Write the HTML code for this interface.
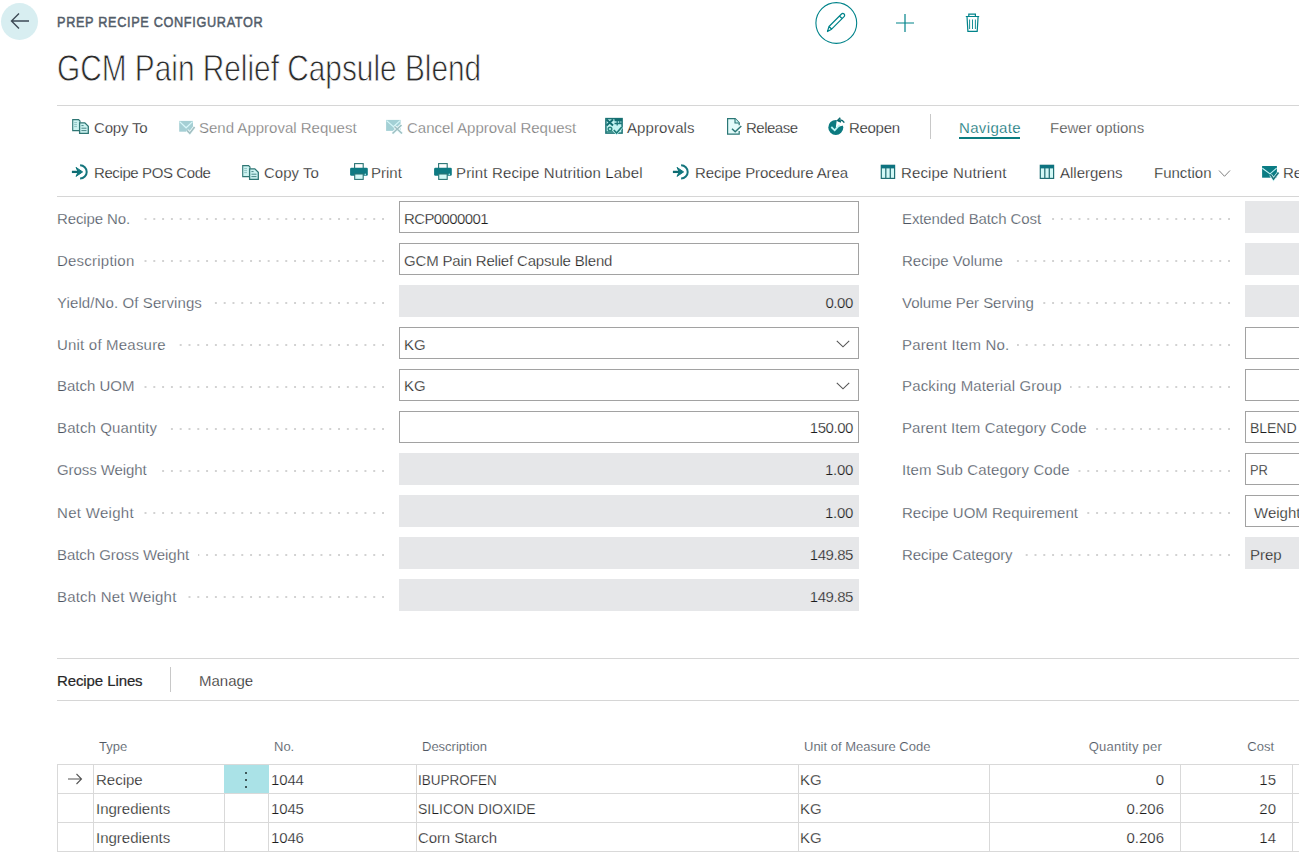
<!DOCTYPE html>
<html><head><meta charset="utf-8"><style>
html,body{margin:0;padding:0;background:#fff;width:1299px;height:852px;overflow:hidden;position:relative;font-family:"Liberation Sans",sans-serif}
.t{position:absolute;white-space:nowrap;-webkit-text-stroke:0.25px #fff}
.r{position:absolute}
.dots{position:absolute;height:2px;background-image:linear-gradient(to right,transparent 6.8px,#d2d2d2 6.8px);background-size:8.8px 2px;background-position:right top;background-repeat:repeat-x}
</style></head><body>
<div class="r" style="left:1px;top:3px;width:37px;height:37px;border-radius:50%;background:#d8eef1"></div>
<svg class="r" style="left:10px;top:12px" width="20" height="18" viewBox="0 0 20 18"><path d="M19 9H2M9 1.5L1.5 9L9 16.5" fill="none" stroke="#3d4a55" stroke-width="1.4"/></svg>
<div class="t " style="left:57px;top:12px;font-size:15px;line-height:20px;color:#525c69;font-size:15.5px;-webkit-text-stroke:0.5px #525c69;letter-spacing:0.8px;transform:scaleX(0.82);transform-origin:0 0;">PREP RECIPE CONFIGURATOR</div>
<div class="t " style="left:57px;top:49px;font-size:34px;line-height:40px;color:#2b2b2b;font-size:36px;transform:scaleX(0.828);transform-origin:0 0;-webkit-text-stroke:0.8px #fff;">GCM Pain Relief Capsule Blend</div>
<svg class="r" style="left:814px;top:1px" width="44" height="44" viewBox="0 0 44 44">
<circle cx="22.3" cy="22" r="20.4" fill="none" stroke="#00838a" stroke-width="1.1"/>
<path d="M13.5 30.5L15 25.5L27.5 13a1.8 1.8 0 0 1 2.6 2.6L17.6 28.2Z M25.5 15L28 17.5 M15 25.5L18 28.5" fill="none" stroke="#00838a" stroke-width="1.2" stroke-linejoin="round"/>
</svg>
<svg class="r" style="left:894px;top:12px" width="22" height="22" viewBox="0 0 22 22"><path d="M11 2V20M2 11H20" stroke="#00838a" stroke-width="1.2"/></svg>
<svg class="r" style="left:962px;top:11px" width="20" height="22" viewBox="0 0 20 22">
<path d="M3.8 5.5H17.2 M6.8 5.5V3.2H13.4V5.5 M5 5.5L5.9 20.4H15.2L16.1 5.5" fill="none" stroke="#00838a" stroke-width="1.2"/><path d="M7.6 8.5V18 M10.5 8.5V18 M13.4 8.5V18" fill="none" stroke="#00838a" stroke-width="0.9"/>
</svg>
<div class="r" style="left:57px;top:105px;width:1242px;height:1px;background:#d6d6d6"></div>
<div class="r" style="left:57px;top:196px;width:1242px;height:1px;background:#d6d6d6"></div>
<div class="r" style="left:57px;top:658px;width:1242px;height:1px;background:#d6d6d6"></div>
<div class="r" style="left:57px;top:700px;width:1242px;height:1px;background:#d6d6d6"></div>
<svg class="r" style="left:68px;top:114px" width="24" height="24" viewBox="0 0 24 24"><path d="M4.7 5.6H10.6L12 7V16.6H4.7Z" fill="#cdf3f1" stroke="#2f7674" stroke-width="1.1"/>
<path d="M6.2 8.6H9M6.2 10.6H9M6.2 12.6H9" stroke="#86bcbc" stroke-width="0.9"/>
<path d="M11.6 8.8H16.8L20.3 12.2V19.3H11.6Z" fill="#cdf3f1" stroke="#2f7674" stroke-width="1.3"/>
<path d="M13.4 11.6H15.6M13.4 14.2H18.5M13.4 16.6H18.5" stroke="#4a8888" stroke-width="1"/></svg>
<div class="t " style="left:94px;top:118px;font-size:15px;line-height:20px;color:#222222;letter-spacing:-0.2px">Copy To</div>
<svg class="r" style="left:175px;top:114px" width="24" height="24" viewBox="0 0 24 24"><path d="M4.2 6.9H18V17.7H4.2Z" fill="#a5cfd4"/>
<path d="M4.6 7.6L11.1 13.8L17.6 7.6" fill="none" stroke="#d9f7f9" stroke-width="1.2"/>
<path d="M12 16.4L14.8 19.2L19.6 13" fill="none" stroke="#f2fdfd" stroke-width="3.2"/>
<path d="M12 16.4L14.8 19.2L19.6 13" fill="none" stroke="#a3bfc2" stroke-width="1.6"/></svg>
<div class="t " style="left:199px;top:118px;font-size:15px;line-height:20px;color:#787878;">Send Approval Request</div>
<svg class="r" style="left:382px;top:114px" width="24" height="24" viewBox="0 0 24 24"><path d="M4.1 5.9H18.6V16.9H4.1Z" fill="#a3d0d5"/>
<path d="M4.6 6.6L11.4 12.8L18.1 6.6" fill="none" stroke="#d6f6f8" stroke-width="1.2"/>
<path d="M10.5 19.5L19.5 11M12.5 12.5L20 19.5" stroke="#effcfd" stroke-width="3.2"/>
<path d="M10.5 19.5L19.5 11M12.5 12.5L20 19.5" stroke="#9ebfc2" stroke-width="1.6"/></svg>
<div class="t " style="left:407px;top:118px;font-size:15px;line-height:20px;color:#787878;">Cancel Approval Request</div>
<svg class="r" style="left:601px;top:114px" width="24" height="24" viewBox="0 0 24 24"><rect x="4.9" y="4.6" width="16.2" height="14.5" fill="#c2f4f2" stroke="#1b7274" stroke-width="1.5"/>
<path d="M5.5 5.5L12 11.5M12 5.5L5.5 11.5" stroke="#136e71" stroke-width="2"/>
<rect x="13.5" y="4.5" width="7.6" height="2.8" fill="#136e71"/>
<path d="M16.2 7V11.5M18.8 7V10M13.5 9.5H21" stroke="#1d7779" stroke-width="1.3"/>
<circle cx="9" cy="15" r="1.8" fill="none" stroke="#2a857f" stroke-width="1.5"/>
<path d="M5 17.8H12.5" stroke="#2a857f" stroke-width="1.2"/>
<path d="M12.8 16L15.6 19L21 12.8" fill="none" stroke="#c2f4f2" stroke-width="3"/>
<path d="M12.8 16L15.6 19L21 12.8" fill="none" stroke="#1d7b78" stroke-width="1.7"/></svg>
<div class="t " style="left:627px;top:118px;font-size:15px;line-height:20px;color:#222222;letter-spacing:0.1px">Approvals</div>
<svg class="r" style="left:722px;top:114px" width="24" height="24" viewBox="0 0 24 24"><path d="M5.6 4.7H13.2L17.2 8.7V20.2H5.6Z" fill="#e3fbfa"/>
<path d="M17.2 11.2V8.7L13.2 4.7H5.6V20.2H17.2V17" fill="none" stroke="#2b7776" stroke-width="1.2"/>
<path d="M13 4.7V9H17.2" fill="#c4f2f0" stroke="#2b7776" stroke-width="1.1"/>
<path d="M10 14.8L13.2 17.8L19.3 12" fill="none" stroke="#2b7776" stroke-width="1.5"/></svg>
<div class="t " style="left:746px;top:118px;font-size:15px;line-height:20px;color:#222222;letter-spacing:-0.5px">Release</div>
<svg class="r" style="left:824px;top:114px" width="24" height="24" viewBox="0 0 24 24"><circle cx="11.8" cy="13.4" r="7.5" fill="#0b7a80"/>
<path d="M11.8 13.4L13 4.5L21 6L21 11Z" fill="#fff"/>
<path d="M19.2 10.5A7.5 7.5 0 0 1 11.8 20.9" fill="none" stroke="#0b7a80" stroke-width="0"/>
<path d="M14 6.8Q17.5 4.6 20.3 8.6" fill="none" stroke="#0c6a70" stroke-width="1.5"/>
<path d="M16.3 3.8L13.6 6.6L17 8" fill="none" stroke="#0c6a70" stroke-width="1.5"/>
<path d="M7.3 13L10.7 16.3L15.6 10.8" fill="none" stroke="#bdf6f6" stroke-width="1.8"/></svg>
<div class="t " style="left:849px;top:118px;font-size:15px;line-height:20px;color:#222222;letter-spacing:-0.3px">Reopen</div>
<div class="r" style="left:930px;top:114px;width:1px;height:25px;background:#c8c8c8"></div>
<div class="t " style="left:959px;top:118px;font-size:15px;line-height:20px;color:#006b70;letter-spacing:0.35px">Navigate</div>
<div class="r" style="left:959px;top:137px;width:61px;height:2px;background:#0b7c80"></div>
<div class="t " style="left:1050px;top:118px;font-size:15px;line-height:20px;color:#444444;">Fewer options</div>
<svg class="r" style="left:68px;top:160px" width="24" height="24" viewBox="0 0 24 24"><path d="M3.9 11.9H11" stroke="#0e6a70" stroke-width="2.3"/>
<path d="M8 7.4L14.6 11.9L8 16.4L10.2 11.9Z" fill="#0f767c" stroke="#0f767c" stroke-width="1" stroke-linejoin="round"/>
<path d="M12.1 5.3A6.6 6.6 0 0 1 12.1 18.5" fill="none" stroke="#14757d" stroke-width="2"/></svg>
<div class="t " style="left:94px;top:163px;font-size:15px;line-height:20px;color:#222222;letter-spacing:-0.4px">Recipe POS Code</div>
<svg class="r" style="left:238px;top:160px" width="24" height="24" viewBox="0 0 24 24"><path d="M4.7 5.6H10.6L12 7V16.6H4.7Z" fill="#cdf3f1" stroke="#2f7674" stroke-width="1.1"/>
<path d="M6.2 8.6H9M6.2 10.6H9M6.2 12.6H9" stroke="#86bcbc" stroke-width="0.9"/>
<path d="M11.6 8.8H16.8L20.3 12.2V19.3H11.6Z" fill="#cdf3f1" stroke="#2f7674" stroke-width="1.3"/>
<path d="M13.4 11.6H15.6M13.4 14.2H18.5M13.4 16.6H18.5" stroke="#4a8888" stroke-width="1"/></svg>
<div class="t " style="left:264px;top:163px;font-size:15px;line-height:20px;color:#222222;letter-spacing:0px">Copy To</div>
<svg class="r" style="left:347px;top:160px" width="24" height="24" viewBox="0 0 24 24"><rect x="7.6" y="3.6" width="8.6" height="5" fill="#fff" stroke="#2a7575" stroke-width="1.1"/>
<rect x="3.1" y="7.8" width="17.7" height="8" rx="1.3" fill="#0e7a82"/>
<rect x="7.7" y="14" width="8.5" height="5.4" fill="#d2f8f6" stroke="#2a7575" stroke-width="1.1"/>
<circle cx="18.3" cy="14.4" r="0.8" fill="#9de3e6"/></svg>
<div class="t " style="left:371px;top:163px;font-size:15px;line-height:20px;color:#222222;">Print</div>
<svg class="r" style="left:431px;top:160px" width="24" height="24" viewBox="0 0 24 24"><rect x="7.6" y="3.6" width="8.6" height="5" fill="#fff" stroke="#2a7575" stroke-width="1.1"/>
<rect x="3.1" y="7.8" width="17.7" height="8" rx="1.3" fill="#0e7a82"/>
<rect x="7.7" y="14" width="8.5" height="5.4" fill="#d2f8f6" stroke="#2a7575" stroke-width="1.1"/>
<circle cx="18.3" cy="14.4" r="0.8" fill="#9de3e6"/></svg>
<div class="t " style="left:456px;top:163px;font-size:15px;line-height:20px;color:#222222;letter-spacing:0.15px">Print Recipe Nutrition Label</div>
<svg class="r" style="left:669px;top:160px" width="24" height="24" viewBox="0 0 24 24"><path d="M3.9 11.9H11" stroke="#0e6a70" stroke-width="2.3"/>
<path d="M8 7.4L14.6 11.9L8 16.4L10.2 11.9Z" fill="#0f767c" stroke="#0f767c" stroke-width="1" stroke-linejoin="round"/>
<path d="M12.1 5.3A6.6 6.6 0 0 1 12.1 18.5" fill="none" stroke="#14757d" stroke-width="2"/></svg>
<div class="t " style="left:695px;top:163px;font-size:15px;line-height:20px;color:#222222;letter-spacing:-0.1px">Recipe Procedure Area</div>
<svg class="r" style="left:876px;top:160px" width="24" height="24" viewBox="0 0 24 24"><rect x="5.3" y="5.3" width="13.3" height="13.1" fill="#d3f8f6" stroke="#1f6f74" stroke-width="1.2"/>
<rect x="5" y="5" width="14" height="3.4" fill="#0d7380"/>
<path d="M9.8 8V18.5M14.3 8V18.5" stroke="#2a7379" stroke-width="1.3"/></svg>
<div class="t " style="left:901px;top:163px;font-size:15px;line-height:20px;color:#222222;letter-spacing:0.15px">Recipe Nutrient</div>
<svg class="r" style="left:1035px;top:160px" width="24" height="24" viewBox="0 0 24 24"><rect x="5.3" y="5.3" width="13.3" height="13.1" fill="#d3f8f6" stroke="#1f6f74" stroke-width="1.2"/>
<rect x="5" y="5" width="14" height="3.4" fill="#0d7380"/>
<path d="M9.8 8V18.5M14.3 8V18.5" stroke="#2a7379" stroke-width="1.3"/></svg>
<div class="t " style="left:1060px;top:163px;font-size:15px;line-height:20px;color:#222222;">Allergens</div>
<div class="t " style="left:1154px;top:163px;font-size:15px;line-height:20px;color:#222222;">Function</div>
<svg class="r" style="left:1218px;top:169px" width="13" height="9" viewBox="0 0 13 9"><path d="M1 1.5L6.5 7.3L12 1.5" fill="none" stroke="#808080" stroke-width="1"/></svg>
<svg class="r" style="left:1258px;top:160px" width="24" height="24" viewBox="0 0 24 24"><path d="M4.1 6H18.9V17.7H4.1Z" fill="#0b7c84"/>
<path d="M4.4 8.2L12 13.9L18.6 8.2" fill="none" stroke="#c6f5f6" stroke-width="1.1"/>
<path d="M12.6 14.8L15.5 19.2L20.5 12.6" fill="none" stroke="#d8fafa" stroke-width="3"/>
<path d="M12.6 14.8L15.5 19.2L20.5 12.6" fill="none" stroke="#1f7379" stroke-width="1.6"/></svg>
<div class="t " style="left:1283px;top:163px;font-size:15px;line-height:20px;color:#222222;">Re</div>
<div class="t " style="left:57px;top:209px;font-size:15px;line-height:20px;color:#4b5360;letter-spacing:-0.12px">Recipe No.</div>
<div class="dots" style="left:138px;top:218px;width:246px"></div>
<div class="r" style="left:399px;top:201px;width:460px;height:32px;border:1px solid #a2a2a2;box-sizing:border-box;background:#fff"></div>
<div class="t " style="left:404px;top:209px;font-size:15px;line-height:20px;color:#1c1c1c;letter-spacing:-0.6px;transform:scaleX(1);transform-origin:0 0;-webkit-text-stroke:0.25px #fff">RCP0000001</div>
<div class="t " style="left:57px;top:251px;font-size:15px;line-height:20px;color:#4b5360;letter-spacing:0.22px">Description</div>
<div class="dots" style="left:142px;top:260px;width:242px"></div>
<div class="r" style="left:399px;top:243px;width:460px;height:32px;border:1px solid #a2a2a2;box-sizing:border-box;background:#fff"></div>
<div class="t " style="left:404px;top:251px;font-size:15px;line-height:20px;color:#1c1c1c;letter-spacing:-0.18px;transform:scaleX(1);transform-origin:0 0;-webkit-text-stroke:0.25px #fff">GCM Pain Relief Capsule Blend</div>
<div class="t " style="left:57px;top:293px;font-size:15px;line-height:20px;color:#4b5360;letter-spacing:0.1px">Yield/No. Of Servings</div>
<div class="dots" style="left:210px;top:302px;width:174px"></div>
<div class="r" style="left:399px;top:285px;width:460px;height:32px;background:#e6e7e9"></div>
<div class="t" style="left:399px;width:454px;text-align:right;top:293px;font-size:15px;line-height:20px;color:#1c1c1c;letter-spacing:-0.4px;-webkit-text-stroke:0.25px #e6e7e9">0.00</div>
<div class="t " style="left:57px;top:335px;font-size:15px;line-height:20px;color:#4b5360;letter-spacing:0.2px">Unit of Measure</div>
<div class="dots" style="left:174px;top:344px;width:210px"></div>
<div class="r" style="left:399px;top:327px;width:460px;height:32px;border:1px solid #a2a2a2;box-sizing:border-box;background:#fff"></div>
<svg class="r" style="left:836px;top:340px" width="14" height="8" viewBox="0 0 14 8"><path d="M0.8 0.8L7 6.8L13.2 0.8" fill="none" stroke="#555" stroke-width="1.1"/></svg>
<div class="t " style="left:404px;top:335px;font-size:15px;line-height:20px;color:#1c1c1c;letter-spacing:0px;transform:scaleX(1);transform-origin:0 0;-webkit-text-stroke:0.25px #fff">KG</div>
<div class="t " style="left:57px;top:376px;font-size:15px;line-height:20px;color:#4b5360;letter-spacing:0px">Batch UOM</div>
<div class="dots" style="left:142px;top:386px;width:242px"></div>
<div class="r" style="left:399px;top:369px;width:460px;height:32px;border:1px solid #a2a2a2;box-sizing:border-box;background:#fff"></div>
<svg class="r" style="left:836px;top:382px" width="14" height="8" viewBox="0 0 14 8"><path d="M0.8 0.8L7 6.8L13.2 0.8" fill="none" stroke="#555" stroke-width="1.1"/></svg>
<div class="t " style="left:404px;top:376px;font-size:15px;line-height:20px;color:#1c1c1c;letter-spacing:0px;transform:scaleX(1);transform-origin:0 0;-webkit-text-stroke:0.25px #fff">KG</div>
<div class="t " style="left:57px;top:418px;font-size:15px;line-height:20px;color:#4b5360;letter-spacing:0.13px">Batch Quantity</div>
<div class="dots" style="left:166px;top:428px;width:218px"></div>
<div class="r" style="left:399px;top:411px;width:460px;height:32px;border:1px solid #a2a2a2;box-sizing:border-box;background:#fff"></div>
<div class="t" style="left:399px;width:454px;text-align:right;top:418px;font-size:15px;line-height:20px;color:#1c1c1c;letter-spacing:-0.45px;-webkit-text-stroke:0.25px #fff">150.00</div>
<div class="t " style="left:57px;top:460px;font-size:15px;line-height:20px;color:#4b5360;letter-spacing:-0.08px">Gross Weight</div>
<div class="dots" style="left:156px;top:470px;width:228px"></div>
<div class="r" style="left:399px;top:453px;width:460px;height:32px;background:#e6e7e9"></div>
<div class="t" style="left:399px;width:454px;text-align:right;top:460px;font-size:15px;line-height:20px;color:#1c1c1c;letter-spacing:-0.3px;-webkit-text-stroke:0.25px #e6e7e9">1.00</div>
<div class="t " style="left:57px;top:503px;font-size:15px;line-height:20px;color:#4b5360;letter-spacing:0.3px">Net Weight</div>
<div class="dots" style="left:143px;top:512px;width:241px"></div>
<div class="r" style="left:399px;top:495px;width:460px;height:32px;background:#e6e7e9"></div>
<div class="t" style="left:399px;width:454px;text-align:right;top:503px;font-size:15px;line-height:20px;color:#1c1c1c;letter-spacing:-0.3px;-webkit-text-stroke:0.25px #e6e7e9">1.00</div>
<div class="t " style="left:57px;top:545px;font-size:15px;line-height:20px;color:#4b5360;letter-spacing:-0.06px">Batch Gross Weight</div>
<div class="dots" style="left:198px;top:554px;width:186px"></div>
<div class="r" style="left:399px;top:537px;width:460px;height:32px;background:#e6e7e9"></div>
<div class="t" style="left:399px;width:454px;text-align:right;top:545px;font-size:15px;line-height:20px;color:#1c1c1c;letter-spacing:-0.45px;-webkit-text-stroke:0.25px #e6e7e9">149.85</div>
<div class="t " style="left:57px;top:587px;font-size:15px;line-height:20px;color:#4b5360;letter-spacing:0.19px">Batch Net Weight</div>
<div class="dots" style="left:185px;top:596px;width:199px"></div>
<div class="r" style="left:399px;top:579px;width:460px;height:32px;background:#e6e7e9"></div>
<div class="t" style="left:399px;width:454px;text-align:right;top:587px;font-size:15px;line-height:20px;color:#1c1c1c;letter-spacing:-0.45px;-webkit-text-stroke:0.25px #e6e7e9">149.85</div>
<div class="t " style="left:902px;top:209px;font-size:15px;line-height:20px;color:#4b5360;letter-spacing:-0.1px">Extended Batch Cost</div>
<div class="dots" style="left:1050px;top:218px;width:180px"></div>
<div class="r" style="left:1245px;top:201px;width:80px;height:32px;background:#e6e7e9"></div>
<div class="t " style="left:902px;top:251px;font-size:15px;line-height:20px;color:#4b5360;letter-spacing:0px">Recipe Volume</div>
<div class="dots" style="left:1011px;top:260px;width:219px"></div>
<div class="r" style="left:1245px;top:243px;width:80px;height:32px;background:#e6e7e9"></div>
<div class="t " style="left:902px;top:293px;font-size:15px;line-height:20px;color:#4b5360;letter-spacing:-0.05px">Volume Per Serving</div>
<div class="dots" style="left:1042px;top:302px;width:188px"></div>
<div class="r" style="left:1245px;top:285px;width:80px;height:32px;background:#e6e7e9"></div>
<div class="t " style="left:902px;top:335px;font-size:15px;line-height:20px;color:#4b5360;letter-spacing:0.15px">Parent Item No.</div>
<div class="dots" style="left:1017px;top:344px;width:213px"></div>
<div class="r" style="left:1245px;top:327px;width:80px;height:32px;border:1px solid #a2a2a2;box-sizing:border-box;background:#fff"></div>
<div class="t " style="left:902px;top:376px;font-size:15px;line-height:20px;color:#4b5360;letter-spacing:0.14px">Packing Material Group</div>
<div class="dots" style="left:1070px;top:386px;width:160px"></div>
<div class="r" style="left:1245px;top:369px;width:80px;height:32px;border:1px solid #a2a2a2;box-sizing:border-box;background:#fff"></div>
<div class="t " style="left:902px;top:418px;font-size:15px;line-height:20px;color:#4b5360;letter-spacing:0.08px">Parent Item Category Code</div>
<div class="dots" style="left:1095px;top:428px;width:135px"></div>
<div class="r" style="left:1245px;top:411px;width:80px;height:32px;border:1px solid #a2a2a2;box-sizing:border-box;background:#fff"></div>
<div class="t " style="left:1250px;top:418px;font-size:15px;line-height:20px;color:#1c1c1c;letter-spacing:-0.1px;transform:scaleX(0.94);transform-origin:0 0;-webkit-text-stroke:0.25px #fff">BLEND</div>
<div class="t " style="left:902px;top:460px;font-size:15px;line-height:20px;color:#4b5360;letter-spacing:0.12px">Item Sub Category Code</div>
<div class="dots" style="left:1077px;top:470px;width:153px"></div>
<div class="r" style="left:1245px;top:453px;width:80px;height:32px;border:1px solid #a2a2a2;box-sizing:border-box;background:#fff"></div>
<div class="t " style="left:1250px;top:460px;font-size:15px;line-height:20px;color:#1c1c1c;letter-spacing:0px;transform:scaleX(0.86);transform-origin:0 0;-webkit-text-stroke:0.25px #fff">PR</div>
<div class="t " style="left:902px;top:503px;font-size:15px;line-height:20px;color:#4b5360;letter-spacing:0px">Recipe UOM Requirement</div>
<div class="dots" style="left:1087px;top:512px;width:143px"></div>
<div class="r" style="left:1245px;top:495px;width:80px;height:32px;border:1px solid #a2a2a2;box-sizing:border-box;background:#fff"></div>
<div class="t " style="left:1254px;top:503px;font-size:15px;line-height:20px;color:#1c1c1c;letter-spacing:0px;transform:scaleX(1);transform-origin:0 0;-webkit-text-stroke:0.25px #fff">Weight</div>
<div class="t " style="left:902px;top:545px;font-size:15px;line-height:20px;color:#4b5360;letter-spacing:-0.08px">Recipe Category</div>
<div class="dots" style="left:1022px;top:554px;width:208px"></div>
<div class="r" style="left:1245px;top:537px;width:80px;height:32px;background:#e6e7e9"></div>
<div class="t " style="left:1250px;top:545px;font-size:15px;line-height:20px;color:#1c1c1c;letter-spacing:0px;transform:scaleX(1);transform-origin:0 0;-webkit-text-stroke:0.25px #e6e7e9">Prep</div>
<div class="t " style="left:57px;top:671px;font-size:15px;line-height:20px;color:#262626;letter-spacing:-0.1px;-webkit-text-stroke:0.22px #333">Recipe Lines</div>
<div class="r" style="left:170px;top:667px;width:1px;height:25px;background:#c8c8c8"></div>
<div class="t " style="left:199px;top:671px;font-size:15px;line-height:20px;color:#222222;">Manage</div>
<div class="t" style="left:99px;top:739px;font-size:13px;line-height:16px;color:#505863;letter-spacing:0px;-webkit-text-stroke:0.15px #fff">Type</div>
<div class="t" style="left:274px;top:739px;font-size:13px;line-height:16px;color:#505863;letter-spacing:0px;-webkit-text-stroke:0.15px #fff">No.</div>
<div class="t" style="left:422px;top:739px;font-size:13px;line-height:16px;color:#505863;letter-spacing:0px;-webkit-text-stroke:0.15px #fff">Description</div>
<div class="t" style="left:804px;top:739px;font-size:13px;line-height:16px;color:#505863;letter-spacing:0px;-webkit-text-stroke:0.15px #fff">Unit of Measure Code</div>
<div class="t" style="left:1000px;width:162px;text-align:right;top:739px;font-size:13px;line-height:16px;color:#505863;letter-spacing:0.2px;-webkit-text-stroke:0.15px #fff">Quantity per</div>
<div class="t" style="left:1200px;width:74px;text-align:right;top:739px;font-size:13px;line-height:16px;color:#505863;letter-spacing:0px;-webkit-text-stroke:0.15px #fff">Cost</div>
<div class="r" style="left:57px;top:764px;width:1242px;height:1px;background:#d9d9d9"></div>
<div class="r" style="left:57px;top:793px;width:1242px;height:1px;background:#d9d9d9"></div>
<div class="r" style="left:57px;top:822px;width:1242px;height:1px;background:#d9d9d9"></div>
<div class="r" style="left:57px;top:851px;width:1242px;height:1px;background:#d9d9d9"></div>
<div class="r" style="left:57px;top:764px;width:1px;height:88px;background:#d9d9d9"></div>
<div class="r" style="left:93px;top:764px;width:1px;height:88px;background:#d9d9d9"></div>
<div class="r" style="left:268px;top:764px;width:1px;height:88px;background:#d9d9d9"></div>
<div class="r" style="left:416px;top:764px;width:1px;height:88px;background:#d9d9d9"></div>
<div class="r" style="left:798px;top:764px;width:1px;height:88px;background:#d9d9d9"></div>
<div class="r" style="left:989px;top:764px;width:1px;height:88px;background:#d9d9d9"></div>
<div class="r" style="left:1180px;top:764px;width:1px;height:88px;background:#d9d9d9"></div>
<div class="r" style="left:1292px;top:764px;width:1px;height:88px;background:#d9d9d9"></div>
<div class="r" style="left:224px;top:793px;width:1px;height:59px;background:#d9d9d9"></div>
<div class="r" style="left:224px;top:765px;width:45px;height:28px;background:#aae2e7"></div>
<div class="r" style="left:245px;top:772px;width:2.4px;height:2.4px;border-radius:50%;background:#1d2b2b"></div>
<div class="r" style="left:245px;top:779px;width:2.4px;height:2.4px;border-radius:50%;background:#1d2b2b"></div>
<div class="r" style="left:245px;top:786px;width:2.4px;height:2.4px;border-radius:50%;background:#1d2b2b"></div>
<svg class="r" style="left:67px;top:773px" width="16" height="12" viewBox="0 0 16 12"><path d="M1 6H14.5M9.5 1L14.5 6L9.5 11" fill="none" stroke="#555" stroke-width="1.1"/></svg>
<div class="t " style="left:96px;top:770px;font-size:15px;line-height:20px;color:#1c1c1c;">Recipe</div>
<div class="t " style="left:271px;top:770px;font-size:15px;line-height:20px;color:#1c1c1c;letter-spacing:-0.15px">1044</div>
<div class="t " style="left:418px;top:770px;font-size:15px;line-height:20px;color:#1c1c1c;letter-spacing:0px;transform:scaleX(0.9);transform-origin:0 0">IBUPROFEN</div>
<div class="t " style="left:800px;top:770px;font-size:15px;line-height:20px;color:#1c1c1c;">KG</div>
<div class="t" style="left:1000px;width:164px;text-align:right;top:770px;font-size:15px;line-height:20px;color:#1c1c1c">0</div>
<div class="t" style="left:1200px;width:76px;text-align:right;top:770px;font-size:15px;line-height:20px;color:#1c1c1c">15</div>
<div class="t " style="left:96px;top:799px;font-size:15px;line-height:20px;color:#1c1c1c;">Ingredients</div>
<div class="t " style="left:271px;top:799px;font-size:15px;line-height:20px;color:#1c1c1c;letter-spacing:-0.15px">1045</div>
<div class="t " style="left:418px;top:799px;font-size:15px;line-height:20px;color:#1c1c1c;letter-spacing:0px;transform:scaleX(0.935);transform-origin:0 0">SILICON DIOXIDE</div>
<div class="t " style="left:800px;top:799px;font-size:15px;line-height:20px;color:#1c1c1c;">KG</div>
<div class="t" style="left:1000px;width:164px;text-align:right;top:799px;font-size:15px;line-height:20px;color:#1c1c1c">0.206</div>
<div class="t" style="left:1200px;width:76px;text-align:right;top:799px;font-size:15px;line-height:20px;color:#1c1c1c">20</div>
<div class="t " style="left:96px;top:828px;font-size:15px;line-height:20px;color:#1c1c1c;">Ingredients</div>
<div class="t " style="left:271px;top:828px;font-size:15px;line-height:20px;color:#1c1c1c;letter-spacing:-0.15px">1046</div>
<div class="t " style="left:418px;top:828px;font-size:15px;line-height:20px;color:#1c1c1c;letter-spacing:-0.1px;transform:scaleX(1);transform-origin:0 0">Corn Starch</div>
<div class="t " style="left:800px;top:828px;font-size:15px;line-height:20px;color:#1c1c1c;">KG</div>
<div class="t" style="left:1000px;width:164px;text-align:right;top:828px;font-size:15px;line-height:20px;color:#1c1c1c">0.206</div>
<div class="t" style="left:1200px;width:76px;text-align:right;top:828px;font-size:15px;line-height:20px;color:#1c1c1c">14</div>
</body></html>
